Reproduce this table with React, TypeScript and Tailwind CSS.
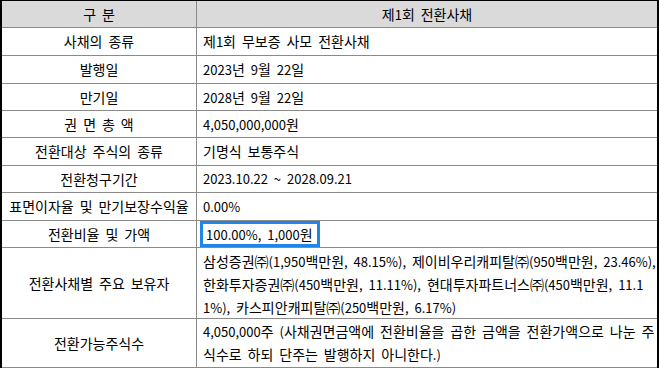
import React from "react";

// hangul runs are set a bit larger so they take the width of the reference's Gulim glyphs
const K = ({ t }: { t: string }) => (
  <span>
    {t.split(/([가-힣㈜]+)/).map((part, i) =>
      /[가-힣㈜]/.test(part) ? (
        <span key={i} className="text-[14px]">
          {part}
        </span>
      ) : (
        <React.Fragment key={i}>{part}</React.Fragment>
      )
    )}
  </span>
);

type Row = { label: string; h: string; value: React.ReactNode };

const rows: Row[] = [
  { label: "사채의 종류", h: "h-[28px]", value: <K t="제1회 무보증 사모 전환사채" /> },
  { label: "발행일", h: "h-[28px]", value: <K t="2023년 9월 22일" /> },
  { label: "만기일", h: "h-[27px]", value: <K t="2028년 9월 22일" /> },
  { label: "권 면 총 액", h: "h-[27px]", value: <K t="4,050,000,000원" /> },
  { label: "전환대상 주식의 종류", h: "h-[28px]", value: <K t="기명식 보통주식" /> },
  { label: "전환청구기간", h: "h-[27px]", value: "2023.10.22 ~ 2028.09.21" },
  { label: "표면이자율 및 만기보장수익율", h: "h-[28px]", value: "0.00%" },
  {
    label: "전환비율 및 가액",
    h: "h-[27px]",
    value: (
      <span className="ml-[-3px] flex h-full w-[120px] items-center border-[3px] border-[#1d86e8] pl-[3px]">
        <K t="100.00%, 1,000원" />
      </span>
    ),
  },
  {
    label: "전환사채별 주요 보유자",
    h: "h-[71px]",
    value: (
      <div className="whitespace-nowrap pt-[2px] leading-[22px]">
        <div>
          <K t="삼성증권㈜(1,950백만원, 48.15%), 제이비우리캐피탈㈜(950백만원, 23.46%)," />
        </div>
        <div>
          <K t="한화투자증권㈜(450백만원, 11.11%), 현대투자파트너스㈜(450백만원, 11.1" />
        </div>
        <div>
          <K t="1%), 카스피안캐피탈㈜(250백만원, 6.17%)" />
        </div>
      </div>
    ),
  },
  {
    label: "전환가능주식수",
    h: "h-[49px]",
    value: (
      <div className="whitespace-nowrap leading-[22px]">
        <div>
          <K t="4,050,000주 (사채권면금액에 전환비율을 곱한 금액을 전환가액으로 나눈 주" />
        </div>
        <div>
          <K t="식수로 하되 단주는 발행하지 아니한다.)" />
        </div>
      </div>
    ),
  },
];

export default function App() {
  return (
    <div className="h-[369px] w-[659px] bg-white font-['Noto_Sans_CJK_KR','Noto_Sans',sans-serif] text-[13px] text-black [word-spacing:3px]">
      <div className="border-x-2 border-t border-x-black border-t-black">
        {/* header */}
        <div className="flex h-[27px] border-b border-[#8a8a8a] bg-[#dadada]">
          <div className="flex w-[195px] items-center justify-center border-r border-[#8a8a8a]">
            <K t="구 분" />
          </div>
          <div className="flex flex-1 items-center justify-center">
            <K t="제1회 전환사채" />
          </div>
        </div>

        {rows.map((r) => (
          <div key={r.label} className={`flex ${r.h} border-b border-[#8a8a8a]`}>
            <div className="flex w-[195px] shrink-0 items-center justify-center whitespace-nowrap border-r border-[#8a8a8a]">
              <K t={r.label} />
            </div>
            <div className="flex flex-1 items-center overflow-hidden pl-[6px]">{r.value}</div>
          </div>
        ))}
      </div>
    </div>
  );
}
